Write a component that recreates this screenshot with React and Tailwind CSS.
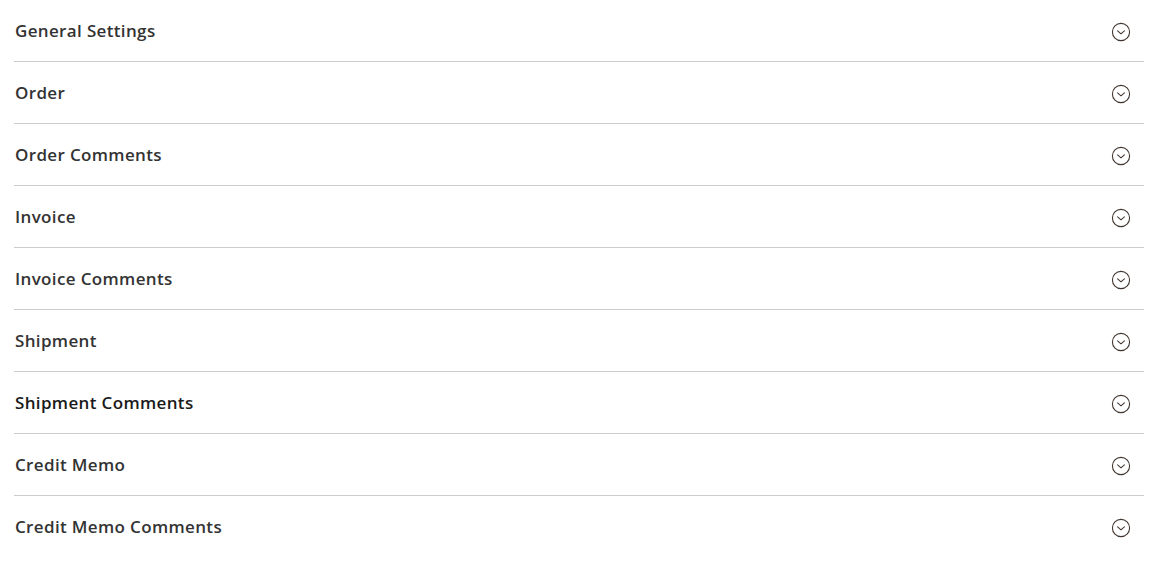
import React from 'react';

const sections = [
    'General Settings',
    'Order',
    'Order Comments',
    'Invoice',
    'Invoice Comments',
    'Shipment',
    'Shipment Comments',
    'Credit Memo',
    'Credit Memo Comments',
];

function ChevronCircle() {
    return (
        <svg width="20" height="20" viewBox="0 0 20 20" fill="none" className="translate-y-[1px]">
            <circle cx="10" cy="10" r="8.6" stroke="#41362f" strokeWidth="1.1" />
            <path d="M6.6 8.9 L10 11.8 L13.4 8.9" stroke="#41362f" strokeWidth="1.1" strokeLinecap="round" strokeLinejoin="round" />
        </svg>
    );
}

export default function App() {
    return (
        <div className="px-[14px] bg-white min-h-[571px]" style={{ fontFamily: '"Open Sans", "Liberation Sans", sans-serif' }}>
            {sections.map((title, i) => (
                <div
                    key={title}
                    className={`flex items-center justify-between h-[62px] pl-px pr-[13px] ${i < sections.length - 1 ? 'border-b border-[#cccccc]' : ''}`}
                >
                    <span className={`text-[17px] font-semibold tracking-[0.35px] ${title === 'Shipment Comments' ? 'text-[#1a1a1a]' : 'text-[#333333]'}`}>
                        {title}
                    </span>
                    <ChevronCircle />
                </div>
            ))}
        </div>
    );
}
